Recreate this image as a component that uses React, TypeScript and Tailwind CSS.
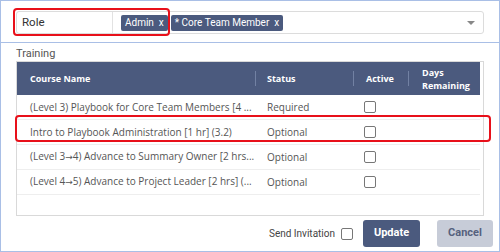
import React from 'react'

const Arrow = () => (
  <span className="text-[9px]" style={{ fontFamily: '"DejaVu Sans", sans-serif' }}>
    {'\u2192'}
  </span>
)

const rows = [
  { name: <>(Level 3) Playbook for Core Team Members [4 ...</>, status: 'Required' },
  { name: <>Intro to Playbook Administration [1 hr] (3.2)</>, status: 'Optional' },
  { name: <>(Level 3<Arrow />4) Advance to Summary Owner [2 hrs...</>, status: 'Optional' },
  { name: <>(Level 4<Arrow />5) Advance to Project Leader [2 hrs] (...</>, status: 'Optional' },
]

function Box({ className = '' }: { className?: string }) {
  return <span className={`block w-[12px] h-[12px] rounded-[2px] border border-[#777] bg-white ${className}`} />
}

export default function App() {
  return (
    <div
      className="w-[500px] h-[252px] border border-[#a9bfe6] bg-white flex flex-col text-[#444] relative"
      style={{ fontFamily: 'Roboto, Arial, sans-serif' }}
    >
      {/* role picker */}
      <div className="h-[42px] shrink-0 border-b border-[#a9bfe6] px-[15px] pt-[10px] relative">
        <div className="h-[23px] flex items-center border border-[#dcdcdc] rounded-[3px]">
          <div className="w-[96px] h-full flex items-center pl-[5px] border-r border-[#e2e2e2] text-[11.5px] text-[#333]">
            Role
          </div>
          <div className="flex items-center gap-[3px] pl-[8px] flex-1">
            <span className="h-[16px] px-[4px] flex items-center rounded-[2px] bg-[#4b5a7e] text-white text-[10px]">
              Admin&nbsp; x
            </span>
            <span className="h-[16px] px-[4px] flex items-center rounded-[2px] bg-[#4b5a7e] text-white text-[10px]">
              * Core Team Member&nbsp; x
            </span>
          </div>
          <div className="pr-[8px]">
            <span className="block w-0 h-0 border-l-[4px] border-r-[4px] border-t-[4px] border-l-transparent border-r-transparent border-t-[#888]" />
          </div>
        </div>
        <div className="absolute left-[12px] top-[7px] w-[157px] h-[28px] border-[2px] border-[#e8101a] rounded-[4px]" />
      </div>

      {/* training */}
      <div className="px-[15px] pt-[3px]">
        <div className="text-[11px] text-[#555] leading-[15px]">Training</div>
        <div
          className="relative border border-[#d9d9d9] h-[155px] pr-[3px]"
          style={{ fontFamily: '"Open Sans", "Noto Sans", sans-serif' }}
        >
          <div className="h-[33px] bg-[#4b5a7e] text-white text-[9px] font-bold flex items-center">
            <div className="w-[238px] pl-[13px]">Course Name</div>
            <div className="w-[98px] h-full flex items-center">
              <span className="h-[15px] border-l border-[#7281a3] mr-[11px]" />
              Status
            </div>
            <div className="w-[55px] h-full flex items-center">
              <span className="h-[15px] border-l border-[#7281a3] mr-[12px]" />
              Active
            </div>
            <div className="flex-1 h-full flex items-center leading-[13px]">
              <span className="h-[15px] border-l border-[#7281a3] mr-[13px]" />
              <span>
                Days
                <br />
                Remaining
              </span>
            </div>
          </div>
          {rows.map((r) => (
            <div key={r.status + String(rows.indexOf(r))} className="h-[25px] border-b border-[#eeeeee] flex items-center text-[10px] text-[#555]">
              <div className="w-[238px] pl-[13px] whitespace-nowrap overflow-hidden">{r.name}</div>
              <div className="w-[98px] pl-[12px]">{r.status}</div>
              <div className="w-[55px] pl-[11px]">
                <Box />
              </div>
            </div>
          ))}
        </div>
      </div>

      {/* highlight for selected row */}
      <div className="absolute left-[14px] top-[114px] w-[476px] h-[27px] border-[2px] border-[#e8101a] rounded-[4px]" />

      {/* footer */}
      <div className="flex items-center justify-end pr-[6px] pt-[4px]">
        <span className="text-[10px] text-[#444] mr-[6px]">Send Invitation</span>
        <Box className="mr-[10px]" />
        <button className="w-[57px] h-[27px] rounded-[3px] bg-[#4b5a7e] text-white text-[11px] font-bold mr-[17px]">
          Update
        </button>
        <button className="w-[56px] h-[27px] rounded-[3px] bg-[#c7ccd8] text-[#56617e] text-[11px] font-bold">
          Cancel
        </button>
      </div>
    </div>
  )
}
